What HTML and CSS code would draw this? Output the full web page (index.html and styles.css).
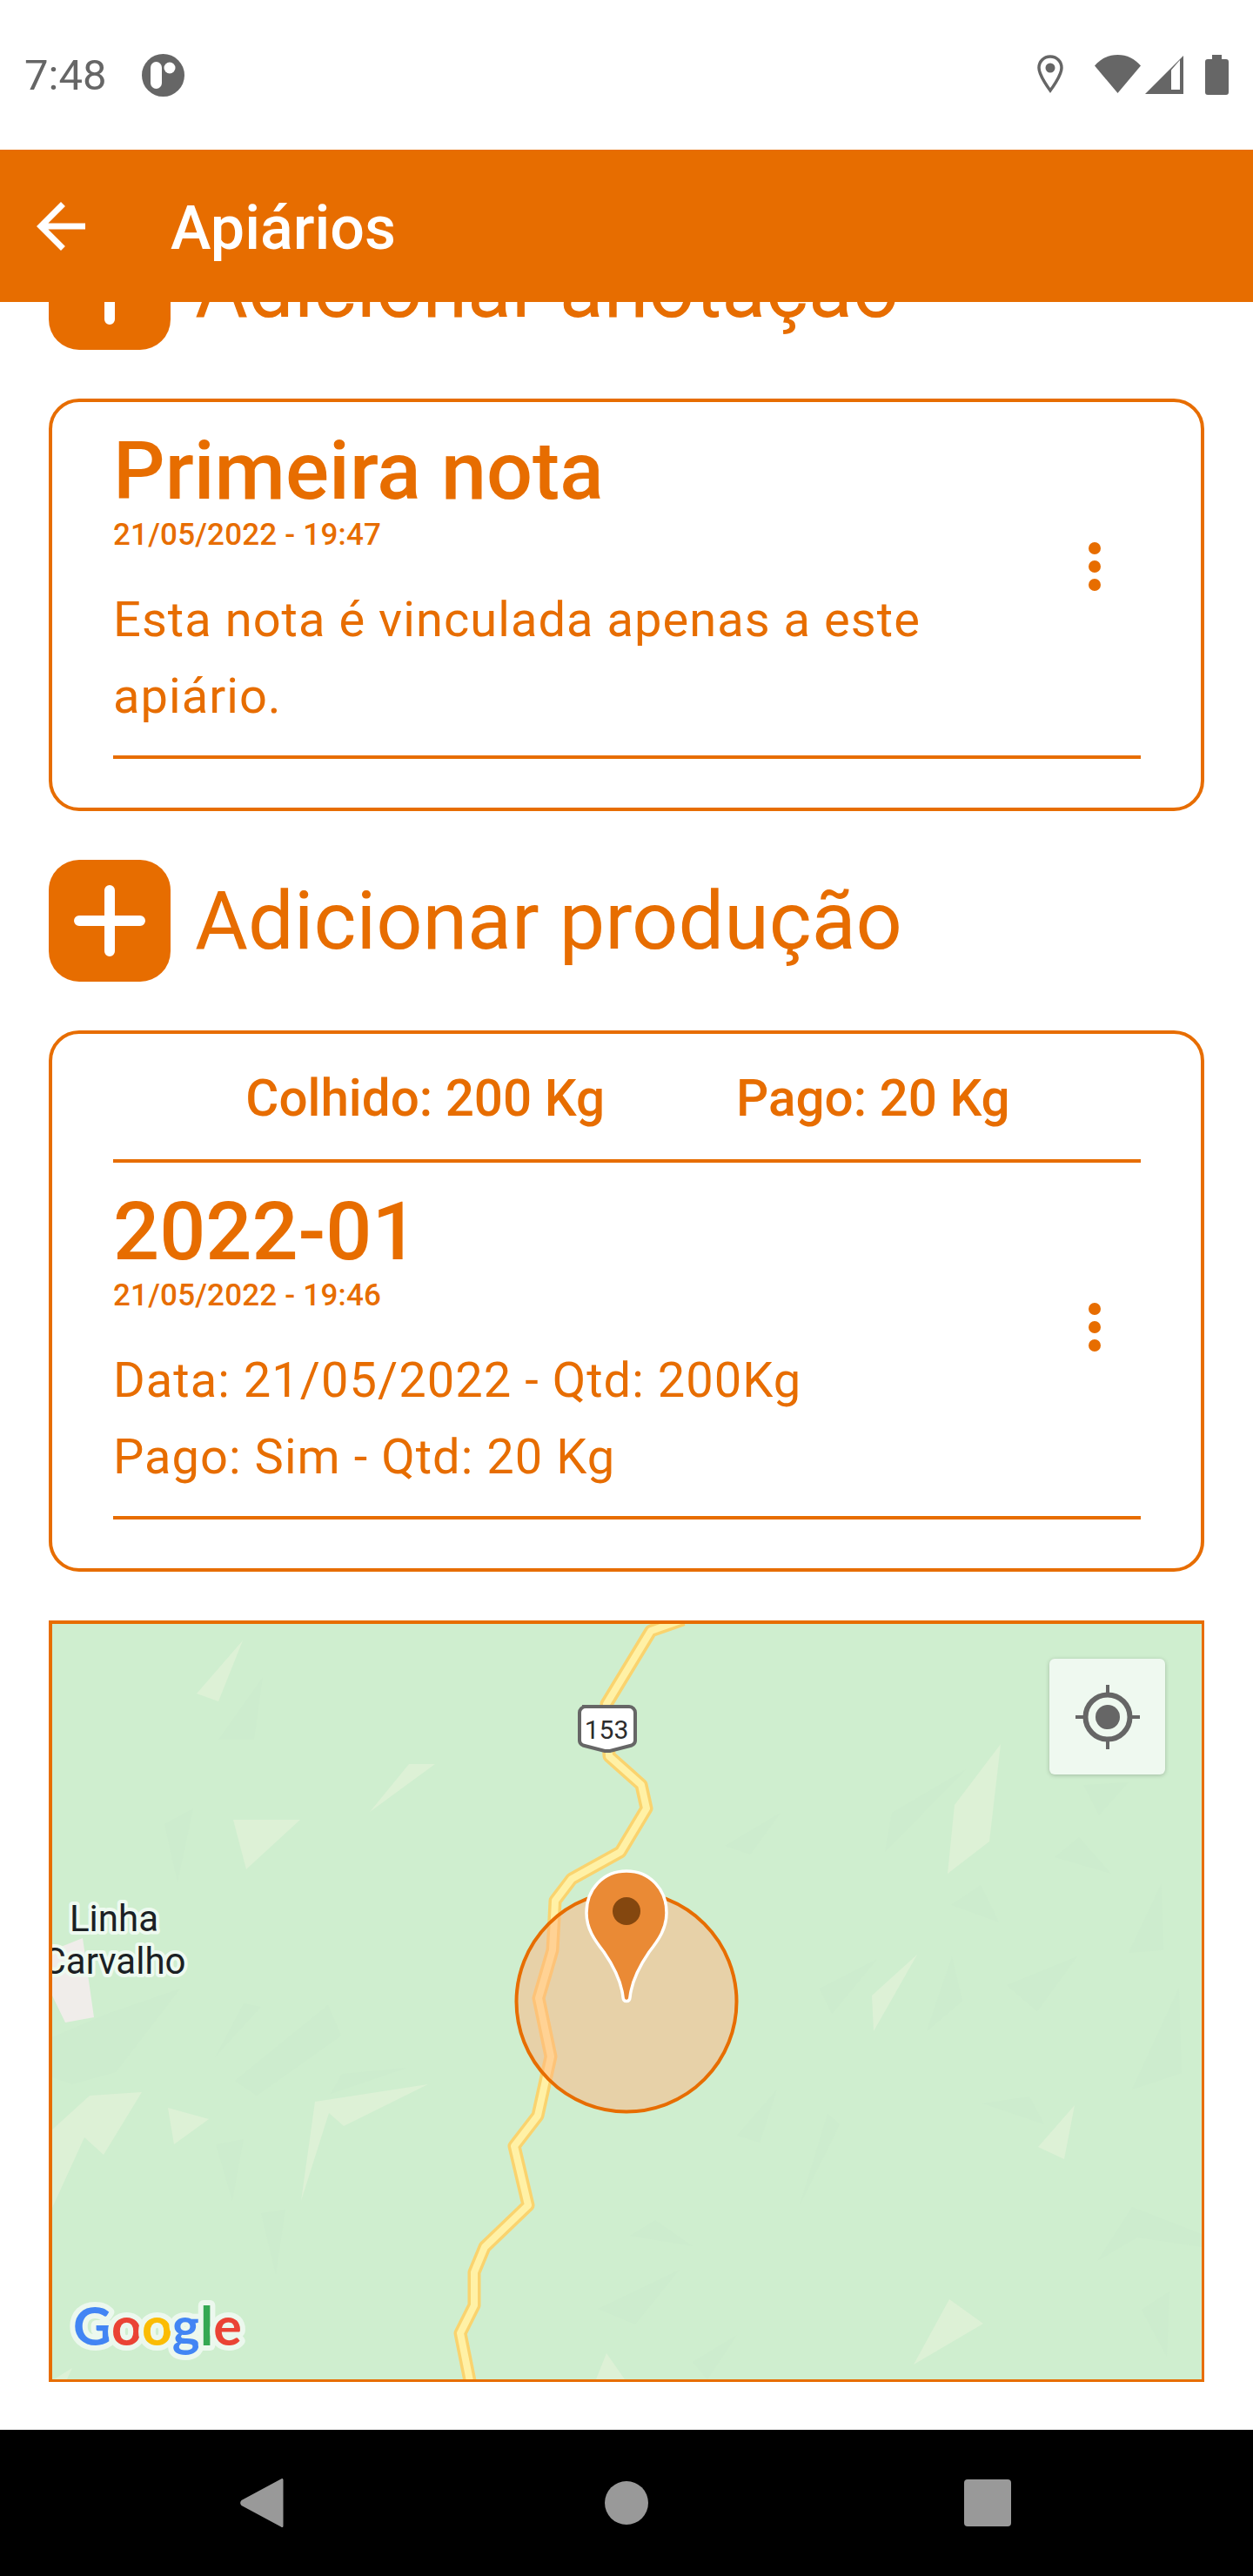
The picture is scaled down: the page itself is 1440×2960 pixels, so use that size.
FILE: index.html
```html
<!DOCTYPE html>
<html lang="pt-BR">
<head>
<meta charset="utf-8">
<title>Apiários</title>
<link rel="stylesheet" href="styles.css">
</head>
<body>
<div class="screen">
  <header class="status">
    <div class="status-left">
      <span class="clock">7:48</span>
      <svg class="notif" width="49" height="49" viewBox="0 0 49 49"><circle cx="24.5" cy="24.5" r="24.5" fill="#666"/><rect x="10" y="9" width="13" height="31" rx="6.5" fill="#fff"/><circle cx="32" cy="16" r="6.5" fill="#fff"/></svg>
    </div>
    <div class="status-right">
      <svg class="st-pin" width="30" height="44" viewBox="0 0 30 44"><path d="M15 2C7.5 2 2 7.8 2 15c0 9 13 26 13 26s13-17 13-26C28 7.8 22.500 2 15 2z" fill="none" stroke="#666" stroke-width="3.500"/><circle cx="15" cy="15" r="5.500" fill="#666"/></svg>
      <svg class="st-wifi" width="53" height="44" viewBox="0 0 53 44"><path d="M0 12.500C7 4.500 16 0 26.500 0S46 4.500 53 12.500L26.500 44z" fill="#666"/></svg>
      <svg class="st-signal" width="44" height="44" viewBox="0 0 44 44"><path d="M44 0V44H0z" fill="#666"/><path d="M30 16.500L40 5V39H30z" fill="#fff"/></svg>
      <svg class="st-batt" width="27" height="46" viewBox="0 0 27 46"><path d="M8 0h11v5h5a3 3 0 0 1 3 3v35a3 3 0 0 1-3 3H3a3 3 0 0 1-3-3V8a3 3 0 0 1 3-3h5z" fill="#666"/></svg>
    </div>
  </header>

  <div class="appbar">
    <svg class="back" width="84" height="84" viewBox="0 0 24 24"><path d="M20 11H7.830l5.590-5.590L12 4l-8 8 8 8 1.410-1.410L7.830 13H20v-2z" fill="#fff"/></svg>
    <h1 class="appbar-title">Apiários</h1>
  </div>

  <main class="content">
    <div class="add-row add-row-clipped">
      <span class="add-btn"><svg width="82" height="82" viewBox="0 0 82 82"><path d="M41 6v70M6 41h70" stroke="#fff" stroke-width="12" stroke-linecap="round"/></svg></span>
      <span class="add-label">Adicionar anotação</span>
    </div>

    <section class="card">
      <div class="item">
        <div class="item-text">
          <div class="item-title">Primeira nota</div>
          <div class="item-date">21/05/2022 - 19:47</div>
          <p class="item-body">Esta nota é vinculada apenas a este<br>apiário.</p>
        </div>
        <svg class="kebab" width="84" height="84" viewBox="0 0 24 24"><circle cx="12" cy="6" r="2"/><circle cx="12" cy="12" r="2"/><circle cx="12" cy="18" r="2"/></svg>
      </div>
      <div class="rule"></div>
    </section>

    <div class="add-row">
      <span class="add-btn"><svg width="82" height="82" viewBox="0 0 82 82"><path d="M41 6v70M6 41h70" stroke="#fff" stroke-width="12" stroke-linecap="round"/></svg></span>
      <span class="add-label">Adicionar produção</span>
    </div>

    <section class="card">
      <div class="totals">
        <span>Colhido: 200 Kg</span>
        <span>Pago: 20 Kg</span>
      </div>
      <div class="rule rule-totals"></div>
      <div class="item">
        <div class="item-text">
          <div class="item-title">2022-01</div>
          <div class="item-date">21/05/2022 - 19:46</div>
          <p class="item-body">Data: 21/05/2022 - Qtd: 200Kg<br>Pago: Sim - Qtd: 20 Kg</p>
        </div>
        <svg class="kebab" width="84" height="84" viewBox="0 0 24 24"><circle cx="12" cy="6" r="2"/><circle cx="12" cy="12" r="2"/><circle cx="12" cy="18" r="2"/></svg>
      </div>
      <div class="rule"></div>
    </section>

    <section class="map">
      <svg class="map-canvas" viewBox="60 1865 1321 868" width="1321" height="868">
        <g class="terrain-light">
          <polygon points="60,2446 103,2407 163,2403 119,2475 97,2455 60,2536"/>
          <polygon points="193,2421 240,2434 200,2463"/>
          <polygon points="362,2414 492,2394 395,2442 378,2427 346,2528"/>
          <polygon points="226,1945 279,1884 251,1954"/>
          <polygon points="425,2081 470,2026 500,2026"/>
          <polygon points="268,2090 345,2090 283,2147"/>
          <polygon points="1150,2003 1097,2073 1089,2152 1137,2115"/>
          <polygon points="1054,2245 1002,2292 1004,2333"/>
          <polygon points="1235,2418 1193,2466 1223,2480"/>
          <polygon points="1091,2641 1130,2669 1050,2716"/>
          <polygon points="697,2703 685,2733 718,2733"/>
          <polygon points="83,2720 62,2733 77,2733"/>
        </g>
        <g class="terrain-dark">
          <polygon points="1110,2032 1025,2082 1017,2127"/>
          <polygon points="1240,2110 1212,2133 1277,2152"/>
          <polygon points="1127,2165 1093,2188 1148,2208"/>
          <polygon points="1335,2163 1297,2243 1337,2240"/>
          <polygon points="1297,2047 1245,2050 1263,2085"/>
          <polygon points="897,2082 833,2120 862,2130"/>
          <polygon points="280,2301 300,2305 247,2363"/>
          <polygon points="377,2303 392,2338 295,2407 270,2390"/>
          <polygon points="468,2375 393,2382 380,2405"/>
          <polygon points="248,2463 280,2457 267,2528"/>
          <polygon points="300,2542 328,2538 317,2613"/>
          <polygon points="60,2386 83,2394 133,2380 207,2284 123,2313 60,2340"/>
          <polygon points="1008,2250 942,2284 956,2313"/>
          <polygon points="1094,2247 1106,2298 1065,2333"/>
          <polygon points="1238,2247 1157,2280 1192,2310"/>
          <polygon points="1355,2283 1358,2381 1301,2400"/>
          <polygon points="893,2400 847,2453 873,2461"/>
          <polygon points="951,2428 965,2440 919,2533"/>
          <polygon points="1183,2408 1129,2416 1200,2440"/>
          <polygon points="1301,2535 1381,2566 1381,2581 1307,2570 1261,2597"/>
          <polygon points="753,2550 724,2568 796,2580"/>
          <polygon points="781,2607 687,2652 730,2670"/>
          <polygon points="1344,2632 1312,2653 1341,2707"/>
          <polygon points="847,2682 796,2713 813,2733"/>
          <polygon points="251,1998 302,1926 292,1998"/>
          <polygon points="189,2095 222,2077 204,2162"/>
        </g>
        <polygon class="built" points="60,2240 95,2226 108,2317 75,2323 60,2292"/>
        <polyline class="road-casing" points="785,1860 748,1873 697,1957 700,2017 737,2050 743,2077 713,2127 657,2158 638,2183 637,2203 635,2240 619,2295 633,2362 618,2430 591,2465 607,2533 557,2581 545,2610 545,2648 529,2680 541,2740"/>
        <polyline class="road-fill" points="785,1860 748,1873 697,1957 700,2017 737,2050 743,2077 713,2127 657,2158 638,2183 637,2203 635,2240 619,2295 633,2362 618,2430 591,2465 607,2533 557,2581 545,2610 545,2648 529,2680 541,2740"/>
        <g class="shield">
          <path d="M669 1960h54a7 7 0 0 1 7 7v32c0 3-1.500 4.500-4 5.500l-25 6.500h-6l-25-6.500c-2.500-1-4-2.500-4-5.500v-32a7 7 0 0 1 7-7z"/>
          <text x="697" y="1997">153</text>
        </g>
        <text class="place" x="131" y="2218">Linha</text>
        <text class="place" x="131" y="2267">Carvalho</text>
        <circle class="radius" cx="720" cy="2299" r="126.500"/>
        <path class="pin" d="M720 2149C693 2149 674 2170 674 2197C674 2215 683 2228 694 2242C705 2258 714 2275 716 2294C716.500 2300 723.500 2300 724 2294C726 2275 735 2258 746 2242C757 2228 766 2215 766 2197C766 2170 747 2149 720 2149Z"/>
        <circle class="pin-dot" cx="720" cy="2195" r="16"/>
        <text class="google" x="84" y="2694"><tspan class="g-blue">G</tspan><tspan class="g-red">o</tspan><tspan class="g-yellow">o</tspan><tspan class="g-blue">g</tspan><tspan class="g-green">l</tspan><tspan class="g-red">e</tspan></text>
      </svg>
      <button class="locate" type="button" aria-label="Minha localização">
        <svg width="76" height="76" viewBox="0 0 76 76"><circle cx="38" cy="38" r="25.500" fill="none" stroke="#666" stroke-width="6"/><circle cx="38" cy="38" r="14" fill="#666"/><path d="M38 1v9M38 66v9M1 38h9M66 38h9" stroke="#666" stroke-width="4"/></svg>
      </button>
    </section>
  </main>

  <nav class="navbar">
    <svg width="50" height="58" viewBox="0 0 50 58"><path d="M47 1.500c1-1.200 2.500-.5 2.500 1v53c0 1.500-1.500 2.200-2.500 1L1.500 32c-1.800-1.800-1.800-4.200 0-6z" fill="#999"/></svg>
    <span class="nav-home"></span>
    <span class="nav-recent"></span>
  </nav>
</div>
</body>
</html>
```
FILE: styles.css
```css
* { box-sizing: border-box; }
html, body { margin: 0; padding: 0; background: #fff; }
body { font-family: Roboto, "Liberation Sans", sans-serif; }

.screen {
  width: 1440px;
  height: 2960px;
  display: flex;
  flex-direction: column;
  overflow: hidden;
  background: #fff;
}

/* status bar */
.status {
  height: 172px;
  flex: none;
  display: flex;
  align-items: flex-start;
  justify-content: space-between;
  padding: 62px 28px 0;
  color: #666;
}
.status-left { display: flex; align-items: center; gap: 41px; }
.clock { font-size: 49px; line-height: 49px; }
.status-right { display: flex; align-items: flex-start; }
.st-pin { margin-right: 36px; margin-top: 1px; }
.st-wifi { margin-right: 5px; margin-top: 1px; }
.st-signal { margin-right: 25px; margin-top: 2px; }
.st-batt { margin-top: 1px; }

/* app bar */
.appbar {
  height: 175px;
  flex: none;
  display: flex;
  align-items: center;
  padding-left: 28px;
  background: #e76d00;
  position: relative;
  z-index: 1;
}
.appbar-title {
  margin: 0 0 0 84px;
  padding-top: 4px;
  font-size: 70px;
  font-weight: 500;
  color: #fff;
}

/* scrolled content */
.content {
  flex: 1;
  min-height: 0;
  overflow: hidden;
  padding: 0 56px;
  display: flex;
  flex-direction: column;
  gap: 56px;
  color: #e76d00;
}
.add-row {
  flex: none;
  display: flex;
  align-items: center;
  gap: 28px;
  height: 140px;
}
.add-row-clipped { margin-top: -85px; }
.add-btn {
  width: 140px;
  height: 140px;
  border-radius: 35px;
  background: #e76d00;
  display: flex;
  align-items: center;
  justify-content: center;
  flex: none;
}
.add-label { font-size: 93.500px; line-height: 100px; }

.card {
  flex: none;
  border: 4px solid #e76d00;
  border-radius: 35px;
  padding: 31px 69px 56px 70px;
  background: #fff;
}
.item { display: flex; align-items: center; }
.item-text { flex: 1; min-width: 0; }
.item-title { font-size: 93.500px; font-weight: 500; line-height: 96px; }
.item-date { margin-top: 5px; font-size: 35px; font-weight: 500; line-height: 42px; letter-spacing: 0.2px; }
.item-body { margin: 32px 0 0; font-size: 56px; line-height: 88px; letter-spacing: 1.050px; }
.kebab { fill: #e76d00; margin: 0 11px 35px 0; flex: none; }
.rule { height: 4px; background: #e76d00; margin-top: 24px; }
.rule-totals { margin-top: 20px; margin-bottom: 31px; }
.totals {
  display: flex;
  justify-content: center;
  gap: 151px;
  margin-top: -7px;
  padding-left: 2px;
  font-size: 58.400px;
  font-weight: 500;
  line-height: 100px;
}

/* map */
.map {
  flex: none;
  position: relative;
  height: 875px;
  border-style: solid;
  border-color: #e76d00;
  border-width: 4px 3px 3px 4px;
  background: #cfeecf;
  overflow: hidden;
}
.map-canvas { display: block; }
.terrain-light polygon { fill: #ddf1d6; }
.terrain-dark polygon { fill: #cdecce; }
.built { fill: #f0edea; }
.road-casing { fill: none; stroke: #fad36e; stroke-width: 15; stroke-linejoin: round; }
.road-fill { fill: none; stroke: #fff1a6; stroke-width: 8; stroke-linejoin: round; }
.shield path { fill: #fff; stroke: #666; stroke-width: 4; }
.shield text { font-family: Roboto, sans-serif; font-size: 30px; fill: #2c2c2c; text-anchor: middle; }
.place {
  font-family: Roboto, sans-serif;
  font-size: 42px;
  fill: #1b2024;
  text-anchor: middle;
  stroke: #eefaf0;
  stroke-width: 8px;
  paint-order: stroke;
  stroke-linejoin: round;
}
.radius { fill: rgba(255, 180, 129, 0.5); stroke: #e76d00; stroke-width: 4; }
.pin { fill: #ea8a35; stroke: #fff; stroke-width: 3.500; }
.pin-dot { fill: #84470f; }
.google {
  font-family: Lato, "Open Sans", sans-serif;
  font-weight: 700;
  font-size: 61px;
  stroke: #ecf8ee;
  stroke-width: 12px;
  paint-order: stroke;
  stroke-linejoin: round;
}
.g-blue { fill: #4285f4; }
.g-red { fill: #ea4335; }
.g-yellow { fill: #fbbc04; }
.g-green { fill: #34a853; }
.locate {
  position: absolute;
  top: 40px;
  right: 42px;
  width: 133px;
  height: 133px;
  padding: 0;
  border: 0;
  border-radius: 6px;
  background: #eff9f0;
  box-shadow: 0 1px 5px rgba(0, 0, 0, 0.22);
  display: flex;
  align-items: center;
  justify-content: center;
}

/* nav bar */
.navbar {
  height: 168px;
  flex: none;
  background: #000;
  display: flex;
  align-items: center;
  padding-left: 276px;
}
.nav-home { width: 50px; height: 50px; margin-left: 369px; border-radius: 50%; background: #999; }
.nav-recent { width: 54px; height: 54px; margin-left: 363px; border-radius: 4px; background: #999; }
```
